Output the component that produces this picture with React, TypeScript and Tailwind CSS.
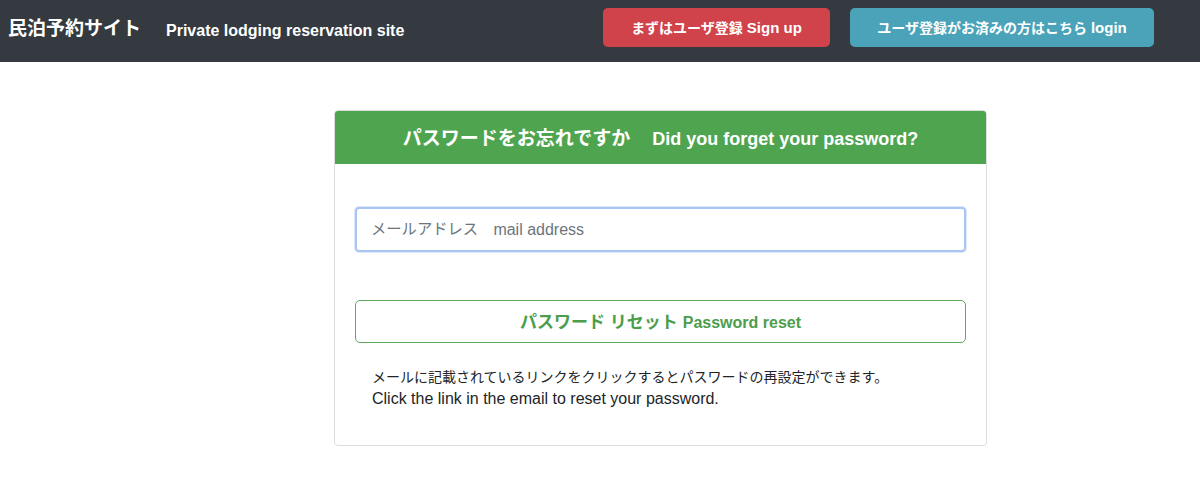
import React from "react";

const font = { fontFamily: '"Liberation Sans", "Noto Sans CJK JP", sans-serif' };

export default function App() {
  return (
    <div className="min-h-[495px] bg-white text-[#212529]" style={font}>
      <nav className="h-[62px] bg-[#343a40] flex items-start pt-2">
        <div className="w-[166px] pl-2 h-[39px] flex items-center text-white font-bold text-[19px] pt-[3px]">
          民泊予約サイト
        </div>
        <div className="w-[437px] h-[39px] flex items-center text-white font-bold text-[16px] pt-[6px]">
          Private lodging reservation site
        </div>
        <button className="w-[227px] h-[39px] rounded-[5px] bg-[#d1434b] text-white font-bold text-[14px] flex items-center justify-center pt-[2px]">
          まずはユーザ登録 <span className="ml-[4px] text-[15px]">Sign up</span>
        </button>
        <button className="ml-[20px] w-[304px] h-[39px] rounded-[5px] bg-[#4aa3b9] text-white font-bold text-[14px] flex items-center justify-center pt-[2px]">
          ユーザ登録がお済みの方はこちら <span className="ml-[4px] text-[15px]">login</span>
        </button>
      </nav>

      <div className="ml-[334px] mt-[48px] w-[653px] border border-[#dedede] rounded-[4px] overflow-hidden">
        <div className="h-[53px] bg-[#4fa54f] flex items-center justify-center text-white font-bold pt-[4px]">
          <span className="text-[19px]">パスワードをお忘れですか</span>
          <span className="text-[18px] ml-[22px]">Did you forget your password?</span>
        </div>
        <div className="px-5 pt-[43px] pb-[36px]">
          <div className="h-[45px] rounded-[4px] border-2 border-[#a9c6f2] shadow-[0_0_0_1px_#dde8fb] flex items-center pl-[14px] text-[16px] text-[#6c757d]">
            <span className="text-[15.3px]">メールアドレス　</span>
            <span>mail address</span>
          </div>
          <button className="mt-[48px] w-full h-[43px] rounded-[5px] border border-[#5fa65f] text-[#4c9d4c] font-bold text-[16px] flex items-center justify-center pt-[2px]">
            <span className="text-[17px]">パスワード リセット</span>
            <span className="ml-[5px]">Password reset</span>
          </button>
          <div className="mt-[24px] pl-[17px] leading-[21px]">
            <div className="text-[14px]">メールに記載されているリンクをクリックするとパスワードの再設定ができます。</div>
            <div className="text-[16px]">Click the link in the email to reset your password.</div>
          </div>
        </div>
      </div>
    </div>
  );
}
